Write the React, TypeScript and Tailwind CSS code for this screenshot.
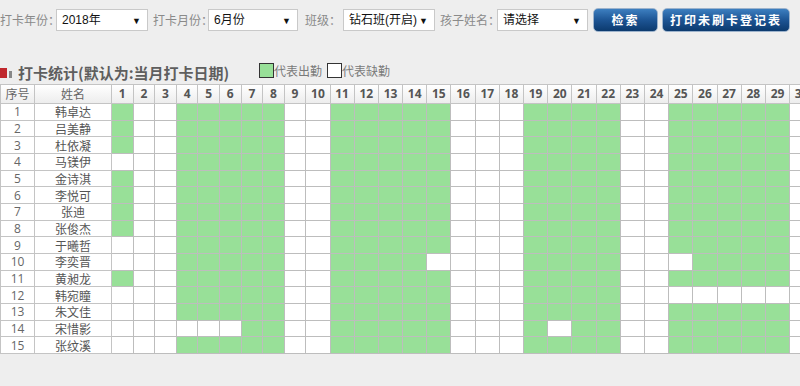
const names = [
  "韩卓达", "吕美静", "杜依凝", "马镁伊", "金诗淇", "李悦可", "张迪", "张俊杰",
  "于曦哲", "李奕晋", "黄昶龙", "韩宛瞳", "朱文佳", "宋惜影", "张纹溪",
];

const workdays = [1, 4, 5, 6, 7, 8, 11, 12, 13, 14, 15, 19, 20, 21, 22, 25, 26, 27, 28, 29];

// day -> rows (1-based) that did not check in on a working day
const missed: Record<number, number[]> = {
  1: [4, 9, 10, 12, 13, 14, 15],
  4: [14],
  5: [14],
  6: [14],
  15: [10],
  20: [14],
  25: [10, 12],
  26: [12],
  27: [12],
  28: [12],
  29: [12],
};

const days = Array.from({ length: 30 }, (_, i) => i + 1);

const cjk = "font-['Microsoft_YaHei','Noto_Sans_CJK_SC',sans-serif]";

const Picker = ({ value, width }: { value: string; width: string }) => (
  <div className={`${width} shrink-0 h-[22px] bg-white border border-[#c9c9c9] flex items-center justify-between pl-[5px] pr-[6px] whitespace-nowrap`}>
    <span className="text-[12px] text-[#111] font-['Liberation_Sans','Noto_Sans_CJK_SC',sans-serif]">{value}</span>
    <span className="text-[9px] text-[#111] leading-none">▼</span>
  </div>
);

const Label = ({ text, cls }: { text: string; cls: string }) => (
  <span className={`${cls} shrink-0 text-[12px] text-[#8a8a8a] whitespace-nowrap ${cjk}`}>{text}</span>
);

const Btn = ({ text, cls }: { text: string; cls: string }) => (
  <button className={`${cls} shrink-0 h-[24px] rounded-[5px] border border-[#9db3cc] bg-gradient-to-b from-[#3d7fc0] via-[#1d5594] to-[#0c3a6e] text-white text-[12px] font-bold tracking-[2px] ${cjk}`}>
    {text}
  </button>
);

export default function App() {
  return (
    <div className="w-[800px] h-[386px] bg-[#eeeeee] overflow-hidden">
      <div className="flex items-center h-[24px] mt-[8px]">
        <Label text="打卡年份：" cls="w-[56px]" />
        <Picker value="2018年" width="w-[92px]" />
        <Label text="打卡月份：" cls="w-[55px] ml-[5px]" />
        <Picker value="6月份" width="w-[90px]" />
        <Label text="班级：" cls="w-[38px] ml-[7px]" />
        <Picker value="钻石班(开启)" width="w-[92px]" />
        <Label text="孩子姓名：" cls="w-[57px] ml-[5px]" />
        <Picker value="请选择" width="w-[91px]" />
        <Btn text="检索" cls="w-[65px] ml-[5px]" />
        <Btn text="打印未刷卡登记表" cls="w-[128px] ml-[4px]" />
      </div>

      <div className="flex h-[22px] mt-[30px]">
        <div className="w-[259px] flex items-center">
          <span className="w-[7px] h-[10px] bg-[#c0282d]" />
          <span className="w-[3px] h-[7px] bg-[#888] ml-[2px] mt-[2px]" />
          <span className={`ml-[6px] text-[15px] font-semibold text-[#5e5e5e] ${cjk}`}>打卡统计(默认为:当月打卡日期)</span>
        </div>
        <div className={`flex items-start pt-[1px] text-[12px] text-[#7a7a7a] ${cjk}`}>
          <span className="w-[15px] h-[15px] bg-[#98e098] border border-[#333]" />
          <span className="leading-[16px]">代表出勤</span>
          <span className="w-[15px] h-[15px] bg-white border border-[#333] ml-[5px]" />
          <span className="leading-[16px]">代表缺勤</span>
        </div>
      </div>

      <table className="table-fixed border-collapse w-[814px] bg-white">
        <colgroup>
          <col className="w-[34px]" />
          <col className="w-[77px]" />
          {days.map((d) => (
            <col key={d} className={d < 10 ? "w-[21.6px]" : "w-[24.2px]"} />
          ))}
        </colgroup>
        <thead>
          <tr className="h-[18px] bg-gradient-to-b from-white to-[#ececec]">
            <th className={`border border-[#c4c4c4] p-0 text-[12px] font-normal text-[#666] ${cjk}`}>序号</th>
            <th className={`border border-[#c4c4c4] p-0 text-[12px] font-normal text-[#666] ${cjk}`}>姓名</th>
            {days.map((d) => (
              <th key={d} className="border border-[#c4c4c4] p-0 text-[12px] font-bold text-[#555] font-['Open_Sans',sans-serif]">
                {d}
              </th>
            ))}
          </tr>
        </thead>
        <tbody>
          {names.map((n, i) => {
            const row = i + 1;
            return (
              <tr key={row} className="h-[16.66px]">
                <td className="border border-[#c4c4c4] p-0 text-center text-[12px] leading-[15px] text-[#666] font-['Open_Sans',sans-serif]">{row}</td>
                <td className={`border border-[#c4c4c4] p-0 text-center text-[12px] leading-[15px] text-[#555] ${cjk}`}>{n}</td>
                {days.map((d) => {
                  const present = workdays.includes(d) && !(missed[d] || []).includes(row);
                  return (
                    <td
                      key={d}
                      className={`border border-[#bdbdbd] p-0 ${present ? "bg-[#98e098]" : "bg-white"}`}
                    />
                  );
                })}
              </tr>
            );
          })}
        </tbody>
      </table>
    </div>
  );
}
